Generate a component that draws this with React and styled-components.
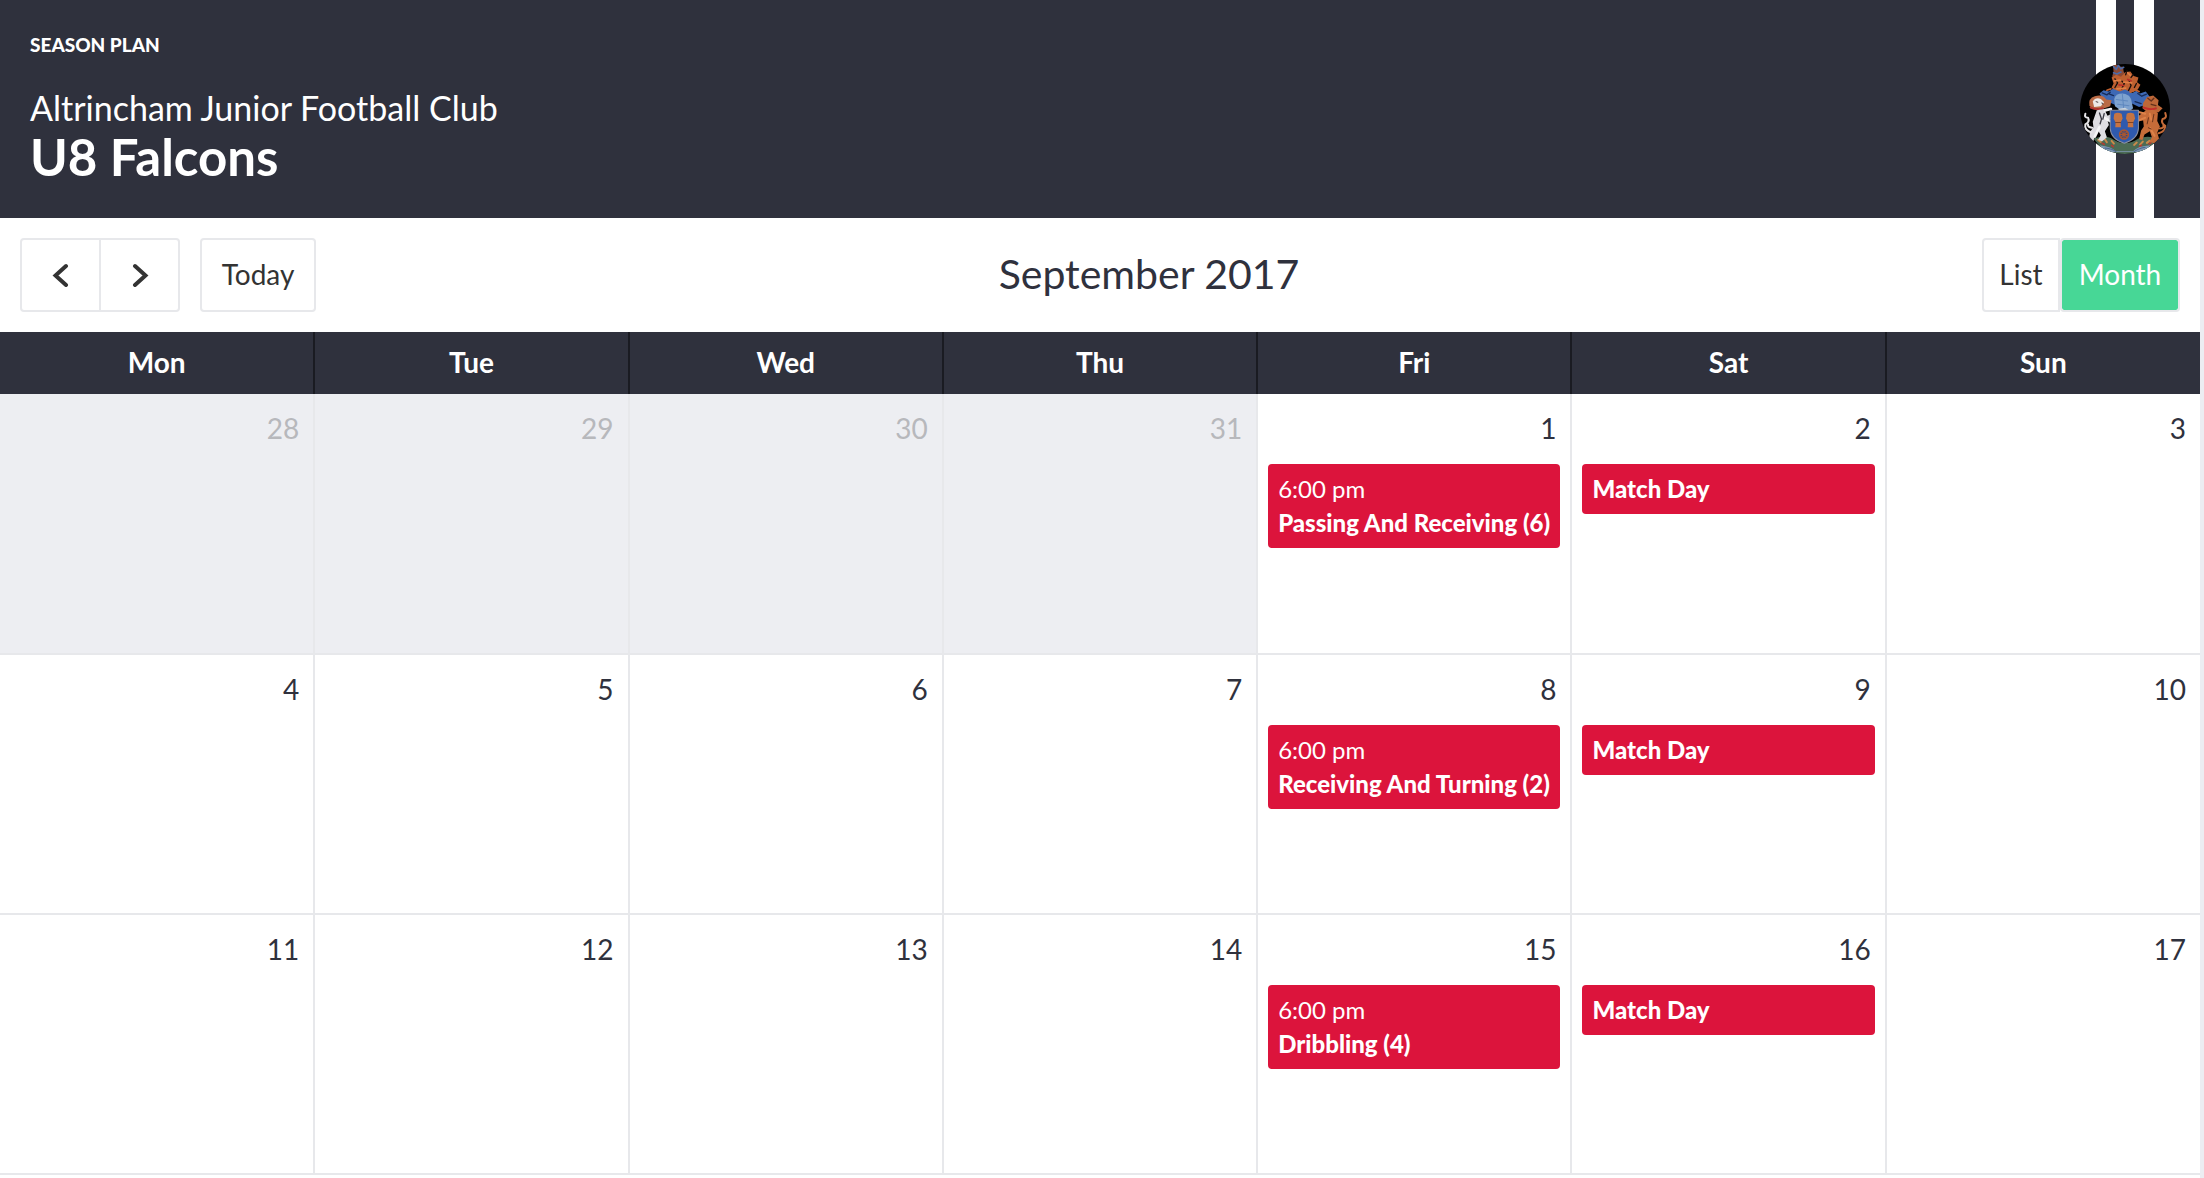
import styled, { createGlobalStyle, css } from "styled-components";

const GlobalStyle = createGlobalStyle`
  * {
    box-sizing: border-box;
  }

  body {
    margin: 0;
    background: #ecedf2;
    color: #2f313d;
    font-family: Lato, "Liberation Sans", sans-serif;
    font-size: 28px;
  }
`;

const Page = styled.div`
  min-height: 100vh;
  margin-right: 4px;
  background: #fff;
`;

const Header = styled.header`
  display: flex;
  justify-content: space-between;
  padding: 0 30px;
  background: #2f313d;
  color: #fff;
`;

const Heading = styled.div`
  padding: 32px 0;
`;

const Eyebrow = styled.div`
  margin-bottom: 30px;
  font-size: 19px;
  line-height: 26px;
  font-weight: 900;
  text-transform: uppercase;
`;

const ClubName = styled.div`
  font-size: 34px;
  line-height: 40px;
`;

const TeamName = styled.h1`
  margin: 0;
  font-size: 51px;
  line-height: 58px;
  font-weight: 700;
`;

const Kit = styled.div`
  display: flex;
  align-items: center;
  justify-content: center;
  width: 90px;
  background: linear-gradient(
    to right,
    transparent 16px,
    #fff 16px 36px,
    transparent 36px 54px,
    #fff 54px 74px,
    transparent 74px
  );
`;

const Toolbar = styled.div`
  display: flex;
  align-items: center;
  justify-content: space-between;
  padding: 20px;
`;

const ToolbarSide = styled.div`
  display: flex;
  gap: 20px;
`;

const ButtonGroup = styled.div`
  display: flex;
`;

const Button = styled.button`
  display: flex;
  align-items: center;
  justify-content: center;
  height: 74px;
  min-width: ${({ $minWidth }) => $minWidth || 78}px;
  padding: 0 10px 2px;
  border: 2px solid #e7e8eb;
  border-radius: 4px;
  background: #fff;
  color: #333;
  font: inherit;
  cursor: pointer;

  ${ButtonGroup} & + & {
    margin-left: -2px;
    border-top-left-radius: 0;
    border-bottom-left-radius: 0;
  }

  ${ButtonGroup} &:first-child {
    border-top-right-radius: 0;
    border-bottom-right-radius: 0;
  }

  ${({ $active }) =>
    $active &&
    css`
      background: #47d796;
      background-clip: padding-box;
      color: #fff;
    `}
`;

const ArrowButton = styled(Button)`
  width: 81px;
  padding-bottom: 0;
`;

const Title = styled.h2`
  margin: 0;
  padding-bottom: 2px;
  font-size: 41px;
  line-height: 48px;
  font-weight: 400;
`;

const Calendar = styled.table`
  width: 100%;
  table-layout: fixed;
  border-collapse: collapse;
`;

const Weekday = styled.th`
  height: 62px;
  padding: 0 0 2px;
  background: #2f313d;
  color: #fff;
  font-weight: 700;

  & + & {
    border-left: 2px solid #1a1b22;
  }
`;

const Day = styled.td`
  height: 260px;
  padding: 0 10px;
  vertical-align: top;
  border-bottom: 2px solid #e7e8eb;
  background: ${({ $muted }) => ($muted ? "#edeef2" : "#fff")};

  & + & {
    border-left: 2px solid #e7e8eb;
  }
`;

const DayNumber = styled.div`
  padding: 16px 4px 18px 0;
  line-height: 36px;
  text-align: right;
  color: ${({ $muted }) => ($muted ? "#b7b8bc" : "inherit")};
`;

const Event = styled.a`
  display: block;
  padding: 8px 10px;
  border-radius: 4px;
  background: #dc143c;
  color: #fff;
  font-size: 24px;
  line-height: 34px;
  text-decoration: none;
`;

const EventTitle = styled.div`
  overflow: hidden;
  font-weight: 900;
  white-space: nowrap;
`;

const weekdays = ["Mon", "Tue", "Wed", "Thu", "Fri", "Sat", "Sun"];

const match = { title: "Match Day" };

const weeks = [
  [
    { day: 28, muted: true },
    { day: 29, muted: true },
    { day: 30, muted: true },
    { day: 31, muted: true },
    { day: 1, event: { time: "6:00 pm", title: "Passing And Receiving (6)" } },
    { day: 2, event: match },
    { day: 3 },
  ],
  [
    { day: 4 },
    { day: 5 },
    { day: 6 },
    { day: 7 },
    { day: 8, event: { time: "6:00 pm", title: "Receiving And Turning (2)" } },
    { day: 9, event: match },
    { day: 10 },
  ],
  [
    { day: 11 },
    { day: 12 },
    { day: 13 },
    { day: 14 },
    { day: 15, event: { time: "6:00 pm", title: "Dribbling (4)" } },
    { day: 16, event: match },
    { day: 17 },
  ],
];

function Chevron({ direction }) {
  return (
    <svg width="18" height="24" viewBox="0 0 18 24" aria-hidden="true">
      <path
        d={direction === "left" ? "M14 3 3.500 12.500 14 22" : "M4 3 14.500 12.500 4 22"}
        fill="none"
        stroke="#333"
        strokeWidth="4"
        strokeLinecap="round"
      />
    </svg>
  );
}

function Crest() {
  return (
    <svg width="90" height="90" viewBox="0 0 268 268" role="img" aria-label="Club crest">
      <clipPath id="crest-clip">
        <circle cx="134" cy="134" r="134" />
      </clipPath>
      <g clipPath="url(#crest-clip)" strokeLinecap="round" strokeLinejoin="round">
        <rect width="268" height="268" fill="#000" />

        {/* compartment */}
        <path d="M40 222q30-10 52-2 42 30 82 2 26-10 58 0l-30 32q-68 30-136 0z" fill="#4c6b55" />
        <path d="M54 226l8 6m12-8l6 9m14-4l7 8m60 4l8-7m10 6l8-9m12 4l8-6" stroke="#c98a4a" strokeWidth="6" />
        <path d="M66 236l6 3m22 3l5 4m78 0l6-4m22-4l6-3" stroke="#b33b32" strokeWidth="5" />
        <path d="M58 242q38 4 48 18h52q14-16 52-18l-18 20H76z" fill="#7f98b4" />
        <path d="M74 250q24 2 34 12m86-14q-22 4-34 14" fill="none" stroke="#4b678e" strokeWidth="3" />

        {/* crest above the helm */}
        <path d="M98 4l10-4 8 8 12 0 2 14 8 14-2 8-34 8-6-16 4-12z" fill="#8d4a34" />
        <path d="M100 8l8 8 6-12 8 10 8-4m-30 16l10 4 12-6" fill="none" stroke="#4d6aa6" strokeWidth="5" />
        <path d="M94 40l14-8 14 6 14-14 14-2 10 14 14 4-4 14 10 8-8 14-14 8H108l-14-14 6-12z" fill="#bf6030" />
        <path d="M104 44l8 12-8 14m18-22l10 10-8 16m22-24l6 14-8 16m24-22l-6 12m-22-50l-4 12m22 0l-6 8" fill="none" stroke="#1a0f0c" strokeWidth="4" />
        <path d="M102 50l20-2m8 6l24 2m-44 18l26-2m6-46l8 8" fill="none" stroke="#e27f45" strokeWidth="5" />
        <path d="M116 62l14 2m12-18l10 4" stroke="#bb2f28" strokeWidth="5" />

        {/* mantling and helm */}
        <path d="M58 88l12-10 16 4 12-8 20 8 16-6 22 10 12-6 10 8 18-6 12 16-14 24-18 6-20-10-26-2-20 8-18-8-16-2z" fill="#3e69b5" />
        <path d="M66 86l14 6 10-8m82 4l12 8 14-6m-34 22l18 6m-94-28l12 4" fill="none" stroke="#182c59" strokeWidth="4" />
        <path d="M150 84l12-8 14 6m-96-4l12-4" fill="none" stroke="#bf6030" strokeWidth="5" />
        <path d="M102 104q4-16 24-16 20 2 26 16l6 28q-14 14-34 8l-20-14z" fill="#7ea2cf" />
        <path d="M108 106l34 4m-30 10l34 4m-20-34l4 40" fill="none" stroke="#5f88bf" strokeWidth="3" />
        <path d="M112 134l22-4 10 6-14 8z" fill="#c9d4df" />

        {/* white lion */}
        <path d="M28 124q-4-22 16-28 24-8 34 10l16 2-4 18-24 8-30-2z" fill="#b96a45" />
        <path d="M38 112q8-14 24-8l10 10-10 12-20 2z" fill="#ece8e6" />
        <path d="M32 130q18 8 36 2" fill="none" stroke="#b33630" strokeWidth="6" />
        <path d="M48 112l5 2m12 2l4 4" stroke="#55494a" strokeWidth="3" />
        <path d="M50 138l22-4 10 20 18-8-2 14-16 8 4 14-12 18 6 18-14 12-12-4 8-14-8-14-10 14-4 18-14-2 4-26 10-14-2-16z" fill="#dedde2" />
        <path d="M74 138l18-4m-34 54l-14 28M72 160l18 10" fill="none" stroke="#f5f5f7" strokeWidth="8" />
        <path d="M58 146l6 18-4 14m12-30l-4 16" fill="none" stroke="#3c3b45" strokeWidth="4" />
        <path d="M34 204q-22-8-18-24 14-8 8-20-12 0-8-12m20 42q-14-2-12-10" fill="none" stroke="#e6e5e8" strokeWidth="6" />

        {/* golden lion */}
        <path d="M188 116l12-18 18-4 16 14-2 14 14 10-12 12-30 2-18-14z" fill="#bd6738" />
        <path d="M202 102l10 8 8-8m-8 18l14 4" fill="none" stroke="#63301b" strokeWidth="4" />
        <path d="M190 130q20 8 36 2" fill="none" stroke="#c52f2b" strokeWidth="6" />
        <path d="M194 140l24-4 14 10-2 24 8 16-8 18 6 20-14 12-16-4 8-14-6-18-16 10-6 16-10-2 6-26 8-12-2-18-16 2-2-12z" fill="#c66c39" />
        <path d="M172 142l22 6m-18 20l18-8m14 30l14 24M208 148l4 18" fill="none" stroke="#dd8249" strokeWidth="6" />
        <path d="M204 160l-4 18m20-28l-4 22m-12 18l8 4" fill="none" stroke="#6b341c" strokeWidth="3" />
        <path d="M234 206q22-6 20-22-14-8-8-20 14-2 8-18m-16 46q14 0 10-12" fill="none" stroke="#c66c39" strokeWidth="6" />

        {/* shield */}
        <path d="M90 138h84v54q-2 32-42 44-40-12-42-44z" fill="#2f5aae" stroke="#8a8fa0" strokeWidth="3" />
        <path d="M102 148q10-5 22 0l3 14-6 12 1 14h-17l1-14-6-12z" fill="#c67443" />
        <path d="M139 148q10-5 22 0l3 14-6 12 1 14h-17l1-14-6-12z" fill="#c67443" />
        <path d="M106 174h15m22 0h15" stroke="#7f4326" strokeWidth="3" />
        <circle cx="131" cy="210" r="13" fill="#36487e" stroke="#a65632" strokeWidth="5" />
        <path d="M131 198v24m-12-12h24m-20-8l16 16m0-16l-16 16" stroke="#a65632" strokeWidth="3" />
      </g>
    </svg>
  );
}

function DayCell({ day, muted, event }) {
  return (
    <Day $muted={muted}>
      <DayNumber $muted={muted}>{day}</DayNumber>
      {event && (
        <Event href="#">
          {event.time && <div>{event.time}</div>}
          <EventTitle>{event.title}</EventTitle>
        </Event>
      )}
    </Day>
  );
}

export default function App() {
  return (
    <>
      <GlobalStyle />
      <Page>
        <Header>
          <Heading>
            <Eyebrow>Season plan</Eyebrow>
            <ClubName>Altrincham Junior Football Club</ClubName>
            <TeamName>U8 Falcons</TeamName>
          </Heading>
          <Kit>
            <Crest />
          </Kit>
        </Header>

        <Toolbar>
          <ToolbarSide>
            <ButtonGroup>
              <ArrowButton aria-label="Previous month">
                <Chevron direction="left" />
              </ArrowButton>
              <ArrowButton aria-label="Next month">
                <Chevron direction="right" />
              </ArrowButton>
            </ButtonGroup>
            <Button $minWidth={116}>Today</Button>
          </ToolbarSide>
          <Title>September 2017</Title>
          <ToolbarSide>
            <ButtonGroup>
              <Button>List</Button>
              <Button $minWidth={120} $active>
                Month
              </Button>
            </ButtonGroup>
          </ToolbarSide>
        </Toolbar>

        <Calendar>
          <thead>
            <tr>
              {weekdays.map((name) => (
                <Weekday key={name} scope="col">
                  {name}
                </Weekday>
              ))}
            </tr>
          </thead>
          <tbody>
            {weeks.map((week) => (
              <tr key={week[0].day}>
                {week.map((cell) => (
                  <DayCell key={cell.day} {...cell} />
                ))}
              </tr>
            ))}
          </tbody>
        </Calendar>
      </Page>
    </>
  );
}
